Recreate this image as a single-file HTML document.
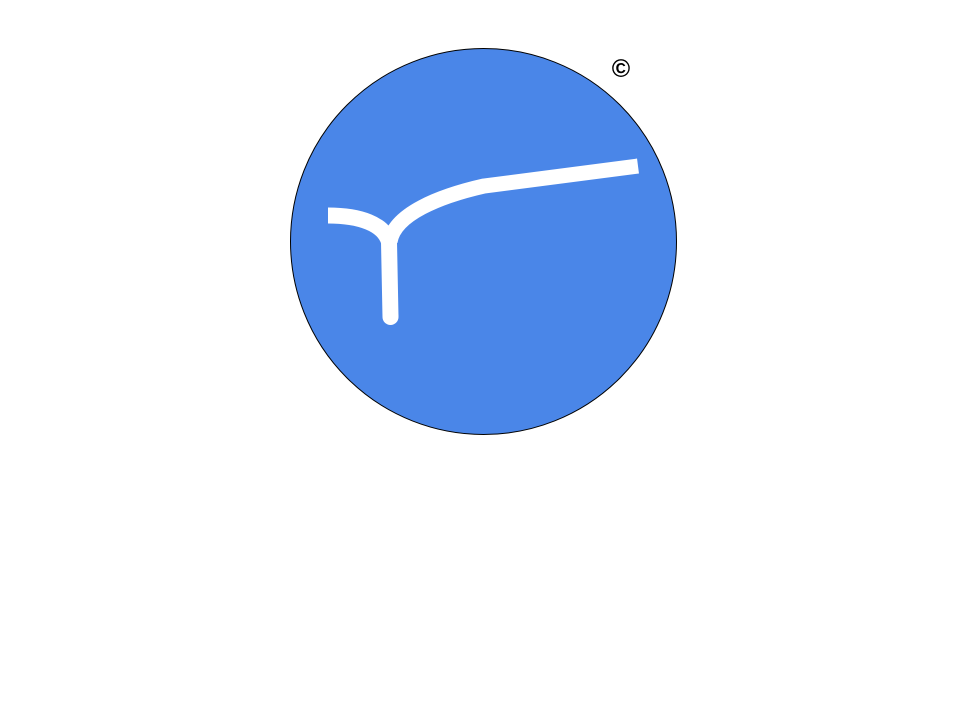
<!DOCTYPE html>
<html><head><style>
html,body{margin:0;padding:0;width:960px;height:720px;background:#fff;overflow:hidden}
</style></head><body>
<svg width="960" height="720" style="position:absolute;left:0;top:0">
<circle cx="483.5" cy="241.5" r="193" fill="#4a86e8" stroke="#000" stroke-width="1"/>
<path d="M328,215.5 C360,215.5 384,224 389,242 L390.5,317" fill="none" stroke="#fff" stroke-width="16"/>
<circle cx="390.5" cy="317" r="8" fill="#fff"/>
<path d="M390,242 C394,214 440,196 484,186 L638,166" fill="none" stroke="#fff" stroke-width="15"/>
<text x="621" y="77" font-family="Liberation Sans, sans-serif" font-size="25" font-weight="bold" text-anchor="middle" fill="#000">©</text>
</svg>
</body></html>
